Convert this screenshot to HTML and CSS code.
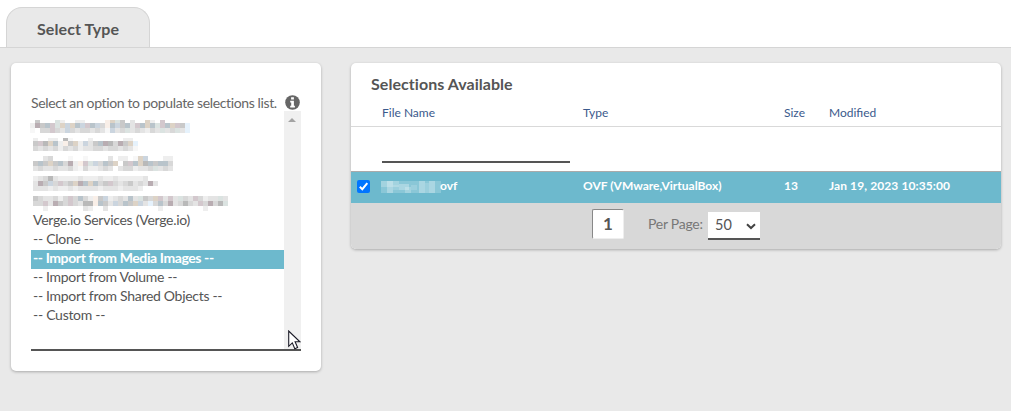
FILE: index.html
```html
<!DOCTYPE html>
<html lang="en"><head><meta charset="utf-8"><title>Select Type</title><link rel="stylesheet" href="styles.css"></head>
<body>
<header class="tabs"><div class="tab"><span class="t-tab">Select Type</span></div></header>
<main class="content">
<section class="card types">
<div class="prompt"><span class="t-prompt">Select an option to populate selections list.</span>
<svg class="info" viewBox="0 0 15 15"><circle cx="7.5" cy="7.5" r="7.3" fill="#666"/><path d="M6.1 2.2h2.8v2.3H6.1zM5.2 5.8h3.7v5h1v1.7H5.2v-1.7h1V7.5h-1z" fill="#fff"/></svg></div>
<div class="listbox">
<div class="options">
<div class="option masked"><svg class="mosaic" data-x="-1" data-y="3" data-top="3" data-rows=".5...g2..22....tyg5.3..y2.p.....|2q5cpgybycbpcb4tcb5c3pcycgpcyp5w|1.44p43b43443431b34g343243g34g3w"></svg></div>
<div class="option masked"><svg class="mosaic" data-x="2" data-y="2" data-top="3" data-rows="2..22.61...2......22.|5p6yc2t5y2b35cq64q5yw|434342434233443443431"></svg></div>
<div class="option masked"><svg class="mosaic" data-x="2" data-y="1" data-top="5" data-rows="..34...1..1....3.22.1yb...22|5c5y5c4q2tpgb4c5y.5pcy6c5cc4|3433433421422343.3442334g343"></svg></div>
<div class="option masked"><svg class="mosaic" data-x="2" data-y="2" data-top="5" data-rows="23463222232223223222223|3q5b4p45yqcyc45p4345343q3|3332322323333233323332"></svg></div>
<div class="option masked"><svg class="mosaic" data-x="2" data-y="3" data-top="5" data-rows="5433424p4c42t5b2343c3g54yp3p3g43p4233g3|44p3q54p4366tc53b4c5yb3w4c4q34643p4q46g|..2.......32..3..........2........2...."></svg></div>
<div class="option"><span class="o1">Verge.io Services (Verge.io)</span></div>
<div class="option"><span class="o1">-- Clone --</span></div>
<div class="option selected"><span class="o3">-- Import from Media Images --</span></div>
<div class="option"><span class="o2">-- Import from Volume --</span></div>
<div class="option"><span class="o2">-- Import from Shared Objects --</span></div>
<div class="option"><span class="o1">-- Custom --</span></div>
</div>
<div class="scroll"><i class="arrow"></i></div>
</div>
<svg class="cursor" viewBox="0 0 13 20"><path d="M.7 1v15.3l3.6-3.4 2.5 5.8 2.8-1.2-2.5-5.7h4.8z" fill="#fff" stroke="#1c1c28" stroke-width="1.1"/></svg>
</section>
<section class="card available">
<h2 class="title"><span class="t-title">Selections Available</span></h2>
<div class="row head"><span></span><span>File Name</span><span>Type</span><span>Size</span><span>Modified</span></div>
<div class="row filter"><span></span><span class="field"></span></div>
<div class="row item"><span class="check"><svg viewBox="0 0 13 13"><rect width="13" height="13" rx="2" fill="#0075ff"/><path d="M2.8 6.8 5.3 9.2 10.3 3.2" fill="none" stroke="#fff" stroke-width="2"/></svg></span><span class="file"><svg class="veil" viewBox="0 0 60 12" fill="#fff"><path d="M0 0h60v12H0z" opacity=".2"/><path d="M0 0h18v6H0zM24 6h6v6h-6z" opacity=".22"/><path d="M6 0h6v12H6zM18 3h10v6H18zM38 0h6v12h-6zM48 0h6v12h-6z" opacity=".28"/><path d="M12 4h6v5h-6zM30 4h6v5h-6zM44 2h4v10h-4z" opacity=".15"/></svg><span>ovf</span></span><span class="kind">OVF (VMware,VirtualBox)</span><span>13</span><span class="date">Jan 19, 2023 10:35:00</span></div>
<div class="pager"><div class="page">1</div><span class="per">Per Page:</span><div class="count"><span>50</span><svg viewBox="0 0 10 7"><path d="M1 1.2 5 5 9 1.2" fill="none" stroke="#444" stroke-width="2"/></svg></div></div>
</section>
</main>
<script src="mosaic.js"></script>
</body></html>
```
FILE: styles.css
```css
*{box-sizing:border-box}
body{margin:0;width:1011px;height:411px;background:#e9e9e9;font-family:Lato,sans-serif;color:#555;overflow:hidden;display:flex;flex-direction:column}
span{white-space:nowrap}
.tabs{height:48px;background:#fff;border-bottom:1px solid #d5d5d5;padding:7px 0 0 6px}
.tab{width:144px;height:40px;background:#e9e9e9;border:1px solid #d5d5d5;border-bottom:0;border-radius:16px 16px 0 0;padding-left:30px;font-weight:700;font-size:16px;line-height:41px;letter-spacing:.08px}
.content{display:flex;gap:30px;align-items:flex-start;padding:15px 0 0 11px}
.card{background:#fff;border-radius:5px;box-shadow:0 1px 3px rgba(0,0,0,.28);overflow:hidden}
.types{position:relative;width:310px;height:308px;padding:30px 20px 20px}
.prompt{height:18px;display:flex;justify-content:space-between;font-size:14px;line-height:19px;color:#666}
.t-prompt{letter-spacing:-.37px}
.info{width:15px;height:15px;margin:2px 1px 0 0;flex:none}
.listbox{height:240px;border-bottom:2px solid #555;display:flex}
.options{width:253px;padding-top:6px;font-size:14px}
.option{height:19px;line-height:16px;padding-left:2px}
.masked{padding:0}
.mosaic{display:block;width:253px;height:19px;overflow:visible}
.o1{letter-spacing:-.28px}
.o2{letter-spacing:-.3px}
.o3{letter-spacing:-.4px}
.selected{background:#6db9cd;color:#fff;font-weight:700}
.scroll{width:17px;background:#f0f0f0;padding:7px 0 0 4px}
.arrow{display:block;border:4px solid transparent;border-top:0;border-bottom-color:#a3a3a3;width:0}
.cursor{position:absolute;left:277px;top:267px;width:13px;height:20px}
.available{width:650px;height:186px}
.title{margin:0;height:41px;padding-left:20px;font-size:16px;line-height:41px;letter-spacing:.05px}
.row{display:grid;grid-template-columns:31px 201px 201px 45px 1fr;font-size:12px}
.head{height:23px;line-height:18px;color:#3b5a8c;border-bottom:1px solid #d9d9d9}
.filter{height:44px}
.field{width:188px;height:36px;border-bottom:2px solid #555}
.item{height:32px;background:#6db9cd;border-top:1px solid #aaa;color:#fff;font-weight:700;line-height:28px}
.check{padding:8px 0 0 6px;line-height:0}
.check svg{width:13px;height:13px}
.file{display:flex}
.veil{width:60px;height:12px;margin:9px -1px 0 -1px}
.date{letter-spacing:.1px}
.pager{height:47px;background:#d8d8d8;display:flex;align-items:flex-start;padding:6px 0 0 241px}
.page{width:32px;height:30px;background:#fff;border:1px solid #eee;border-top-color:#888;border-left-color:#888;border-radius:2px;text-align:center;font-weight:700;font-size:17px;line-height:28px}
.per{width:60px;margin-left:24px;font-size:14px;line-height:30px;color:#777;letter-spacing:-.25px}
.count{width:52px;height:28px;margin-top:3px;background:#fff;border-bottom:2px solid #555;display:flex;justify-content:space-between;padding:0 4px 0 7px;font-size:14.5px;line-height:25px}
.count svg{width:10px;height:7px;margin-top:11px}
```
FILE: mosaic.js
```js
// Draws masked option labels as blocks of colour.
const palette = {1:'#f7f7f7',2:'#eeeeee',3:'#e4e4e4',4:'#d8d8d8',5:'#c9c9c9',6:'#b9b9b9',
  p:'#d3c8cd',q:'#b9adb2',b:'#cbd5df',c:'#b9c4cb',g:'#dbe3e1',y:'#ddd3c6',w:'#e6f2fc',t:'#f9efe8'};
document.querySelectorAll('.mosaic').forEach(svg => {
  const x = +svg.dataset.x;
  let y = +svg.dataset.y;
  svg.dataset.rows.split('|').forEach((row, r) => {
    const h = r ? 5 : +svg.dataset.top;
    [...row].forEach((key, i) => {
      if (!palette[key]) return;
      const rect = document.createElementNS('http://www.w3.org/2000/svg', 'rect');
      rect.setAttribute('x', x + i * 5);
      rect.setAttribute('y', y);
      rect.setAttribute('width', 5);
      rect.setAttribute('height', h);
      rect.setAttribute('fill', palette[key]);
      svg.append(rect);
    });
    y += h;
  });
});
```
